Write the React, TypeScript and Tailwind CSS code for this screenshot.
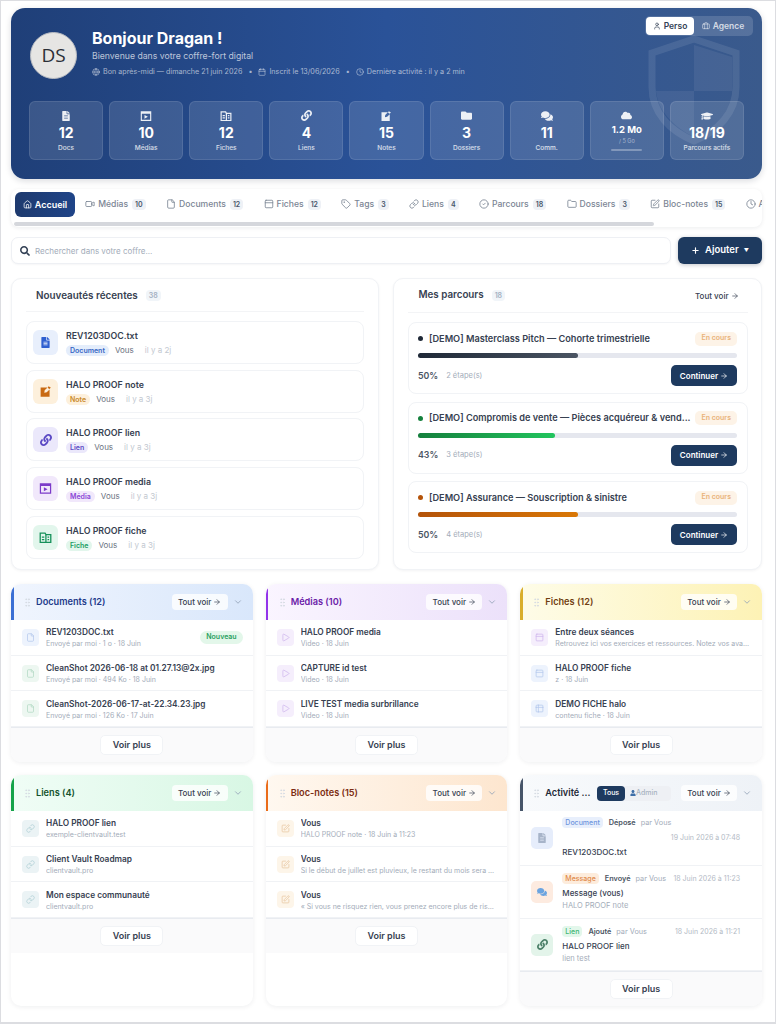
import { ReactNode } from 'react';
import {
  ArrowRight,
  Briefcase,
  Calendar,
  ChevronDown,
  Clock,
  File,
  Folder,
  Globe,
  GripVertical,
  House,
  Link as LinkIcon,
  CircleCheck,
  Play,
  Plus,
  SquarePen,
  Table2,
  Tag,
  User,
  Video,
  PanelTop,
} from 'lucide-react';
import {
  FaCloud,
  FaComments,
  FaFileAlt,
  FaFolder,
  FaGraduationCap,
  FaLink,
  FaSearch,
  FaUser,
} from 'react-icons/fa';

const MediaIcon = ({ className }: { className?: string }) => (
  <svg viewBox="0 0 16 16" className={className} fill="currentColor">
    <path d="M1 1.5h14v13H1zM2.5 5v8h11V5z" fillRule="evenodd" />
    <path d="M6 6.5v5l4.5-2.5z" />
  </svg>
);

const FicheIcon = ({ className }: { className?: string }) => (
  <svg viewBox="0 0 16 16" className={className} fill="none" stroke="currentColor" strokeWidth="1.6">
    <path d="M1.5 2.5h6l1 2h6v9.5h-13z" />
    <path d="M8.5 4.5V14M3.5 7.5h3M3.5 10.5h3M10.5 7.5h2M10.5 10.5h2" />
  </svg>
);

const NoteIcon = ({ className }: { className?: string }) => (
  <svg viewBox="0 0 16 16" className={className} fill="currentColor">
    <path d="M2 3h8.5L7 6.5 6.5 9.5 9.5 9 13 5.500V14.500H2z" />
    <path d="M11.500 1.500 14.500 3 13 5 10.800 3.600z" />
  </svg>
);

const Shield = () => (
  <svg viewBox="0 0 100 110" className="absolute right-[18px] top-[26px] h-[112px] w-[100px] text-white opacity-[0.09]">
    <path
      d="M50 4 92 18v34c0 26-18 44-42 54C26 96 8 78 8 52V18z"
      fill="none"
      stroke="currentColor"
      strokeWidth="7"
    />
    <path d="M50 10 88 22v34H50zM50 56v46C30 92 14 76 12 56z" fill="currentColor" fillOpacity="0.7" />
  </svg>
);

const stats = [
  { icon: <FaFileAlt className="size-[10px]" />, value: '12', label: 'Docs' },
  { icon: <MediaIcon className="size-[12px]" />, value: '10', label: 'Médias' },
  { icon: <FicheIcon className="size-[12px]" />, value: '12', label: 'Fiches' },
  { icon: <FaLink className="size-[11px]" />, value: '4', label: 'Liens' },
  { icon: <NoteIcon className="size-[12px]" />, value: '15', label: 'Notes' },
  { icon: <FaFolder className="size-[11px]" />, value: '3', label: 'Dossiers' },
  { icon: <FaComments className="size-[12px]" />, value: '11', label: 'Comm.' },
];

const tabs = [
  { icon: <Video className="size-[10px]" />, label: 'Médias', count: '10' },
  { icon: <File className="size-[10px]" />, label: 'Documents', count: '12' },
  { icon: <PanelTop className="size-[10px]" />, label: 'Fiches', count: '12' },
  { icon: <Tag className="size-[10px]" />, label: 'Tags', count: '3' },
  { icon: <LinkIcon className="size-[10px]" />, label: 'Liens', count: '4' },
  { icon: <CircleCheck className="size-[10px]" />, label: 'Parcours', count: '18' },
  { icon: <Folder className="size-[10px]" />, label: 'Dossiers', count: '3' },
  { icon: <SquarePen className="size-[10px]" />, label: 'Bloc-notes', count: '15' },
];

const recents = [
  {
    title: 'REV1203DOC.txt',
    kind: 'Document',
    when: 'il y a 2j',
    box: 'bg-[#e8effc] text-[#2f5fd0]',
    badge: 'bg-[#e4edfb] text-[#3767c4]',
    icon: <FaFileAlt className="size-[11px]" />,
  },
  {
    title: 'HALO PROOF note',
    kind: 'Note',
    when: 'il y a 3j',
    box: 'bg-[#fdf0dc] text-[#c96a12]',
    badge: 'bg-[#fdf0dc] text-[#c98a2a]',
    icon: <NoteIcon className="size-[13px]" />,
  },
  {
    title: 'HALO PROOF lien',
    kind: 'Lien',
    when: 'il y a 3j',
    box: 'bg-[#ebe8fb] text-[#5b49c4]',
    badge: 'bg-[#ebe8fb] text-[#5b49c4]',
    icon: <FaLink className="size-[12px]" />,
  },
  {
    title: 'HALO PROOF media',
    kind: 'Média',
    when: 'il y a 3j',
    box: 'bg-[#f1e8fb] text-[#7c3bc9]',
    badge: 'bg-[#f1e8fb] text-[#8a46d6]',
    icon: <MediaIcon className="size-[13px]" />,
  },
  {
    title: 'HALO PROOF fiche',
    kind: 'Fiche',
    when: 'il y a 3j',
    box: 'bg-[#e2f6ec] text-[#16915a]',
    badge: 'bg-[#e2f6ec] text-[#1b9e63]',
    icon: <FicheIcon className="size-[13px]" />,
  },
];

const courses = [
  {
    title: '[DEMO] Masterclass Pitch — Cohorte trimestrielle',
    dot: 'bg-[#1f2937]',
    bar: 'w-1/2 bg-gradient-to-r from-[#1f2937] to-[#4b5563]',
    pct: '50%',
    steps: '2 étape(s)',
  },
  {
    title: '[DEMO] Compromis de vente — Pièces acquéreur & vend...',
    dot: 'bg-[#15803d]',
    bar: 'w-[43%] bg-gradient-to-r from-[#15803d] to-[#22c55e]',
    pct: '43%',
    steps: '3 étape(s)',
  },
  {
    title: '[DEMO] Assurance — Souscription & sinistre',
    dot: 'bg-[#b45309]',
    bar: 'w-1/2 bg-gradient-to-r from-[#b45309] to-[#d97706]',
    pct: '50%',
    steps: '4 étape(s)',
  },
];

type Row = { title: string; sub: string; box: string; icon: ReactNode; isNew?: boolean };

const docBox = 'bg-[#edf3fd] text-[#b4c8ec]';
const docGreen = 'bg-[#edf7f1] text-[#b2d8c3]';
const playBox = 'bg-[#f5eefc] text-[#cfb6ee]';
const linkBox = 'bg-[#ebf3f5] text-[#b0d0d6]';
const noteBox = 'bg-[#fdf5e9] text-[#e8c7a2]';
const docIcon = <File className="size-[9px]" />;
const playIcon = <Play className="size-[9px]" />;
const linkIcon = <LinkIcon className="size-[9px]" />;
const noteIcon = <SquarePen className="size-[9px]" />;

const topWidgets = [
  {
    title: 'Documents (12)',
    head: 'from-[#f0f5fe] to-[#d9e7fb]',
    accent: 'bg-[#3b6fd4]',
    color: 'text-[#1e3a8a]',
    rows: [
      { title: 'REV1203DOC.txt', sub: 'Envoyé par moi · 1 o · 18 Juin', box: docBox, icon: docIcon, isNew: true },
      { title: 'CleanShot 2026-06-18 at 01.27.13@2x.jpg', sub: 'Envoyé par moi · 494 Ko · 18 Juin', box: docGreen, icon: docIcon },
      { title: 'CleanShot-2026-06-17-at-22.34.23.jpg', sub: 'Envoyé par moi · 126 Ko · 17 Juin', box: docGreen, icon: docIcon },
    ] as Row[],
  },
  {
    title: 'Médias (10)',
    head: 'from-[#faf5ff] to-[#ece1fa]',
    accent: 'bg-[#9333ea]',
    color: 'text-[#6b21a8]',
    rows: [
      { title: 'HALO PROOF media', sub: 'Video · 18 Juin', box: playBox, icon: playIcon },
      { title: 'CAPTURE id test', sub: 'Video · 18 Juin', box: playBox, icon: playIcon },
      { title: 'LIVE TEST media surbrillance', sub: 'Video · 18 Juin', box: playBox, icon: playIcon },
    ] as Row[],
  },
  {
    title: 'Fiches (12)',
    head: 'from-[#fefce8] to-[#fdf2b5]',
    accent: 'bg-[#d9ae2c]',
    color: 'text-[#713f12]',
    rows: [
      { title: 'Entre deux séances', sub: 'Retrouvez ici vos exercices et ressources. Notez vos avancées ici', box: playBox, icon: <PanelTop className="size-[9px]" /> },
      { title: 'HALO PROOF fiche', sub: 'z · 18 Juin', box: docBox, icon: <PanelTop className="size-[9px]" /> },
      { title: 'DEMO FICHE halo', sub: 'contenu fiche · 18 Juin', box: docBox, icon: <Table2 className="size-[9px]" /> },
    ] as Row[],
  },
];

const bottomWidgets = [
  {
    title: 'Liens (4)',
    head: 'from-[#f0fdf6] to-[#d8f7e4]',
    accent: 'bg-[#16a34a]',
    color: 'text-[#14532d]',
    rows: [
      { title: 'HALO PROOF lien', sub: 'exemple-clientvault.test', box: linkBox, icon: linkIcon },
      { title: 'Client Vault Roadmap', sub: 'clientvault.pro', box: linkBox, icon: linkIcon },
      { title: 'Mon espace communauté', sub: 'clientvault.pro', box: linkBox, icon: linkIcon },
    ] as Row[],
  },
  {
    title: 'Bloc-notes (15)',
    head: 'from-[#fff8f0] to-[#fde6cf]',
    accent: 'bg-[#ea6c1a]',
    color: 'text-[#7c2d12]',
    rows: [
      { title: 'Vous', sub: 'HALO PROOF note · 18 Juin à 11:23', box: noteBox, icon: noteIcon },
      { title: 'Vous', sub: 'Si le début de juillet est pluvieux, le restant du mois sera pluvieux aussi', box: noteBox, icon: noteIcon },
      { title: 'Vous', sub: '« Si vous ne risquez rien, vous prenez encore plus de risques »', box: noteBox, icon: noteIcon },
    ] as Row[],
  },
];

const activity = [
  {
    kind: 'Document',
    badge: 'bg-[#e8effc] text-[#6f95dc]',
    verb: 'Déposé',
    date: '19 Juin 2026 à 07:48',
    title: 'REV1203DOC.txt',
    sub: '',
    box: 'bg-[#e6edfb] text-[#a7b4c9]',
    icon: <FaFileAlt className="size-[10px]" />,
    h: 'h-[55px]',
  },
  {
    kind: 'Message',
    badge: 'bg-[#fdecdc] text-[#e08a4a]',
    verb: 'Envoyé',
    date: '18 Juin 2026 à 11:23',
    title: 'Message (vous)',
    sub: 'HALO PROOF note',
    box: 'bg-[#fdebe0] text-[#6ba4e0]',
    icon: <FaComments className="size-[10px]" />,
    h: 'h-[53px]',
  },
  {
    kind: 'Lien',
    badge: 'bg-[#e3f7eb] text-[#3fb573]',
    verb: 'Ajouté',
    date: '18 Juin 2026 à 11:21',
    title: 'HALO PROOF lien',
    sub: 'lien test',
    box: 'bg-[#e3f4ea] text-[#4b7f68]',
    icon: <FaLink className="size-[11px]" />,
    h: 'h-[52px]',
  },
];

function WidgetHead({ title, head, accent, color, children }: { title: string; head: string; accent: string; color: string; children?: ReactNode }) {
  return (
    <div className={`relative flex h-[36px] shrink-0 items-center bg-gradient-to-r pl-[11px] pr-[10px] ${head}`}>
      <span className={`absolute bottom-0 left-0 top-0 w-[2.5px] ${accent}`} />
      <GripVertical className="size-[11px] shrink-0 text-[#d5dbe3]" />
      <span className={`ml-[3px] flex-1 truncate text-[9.2px] font-semibold ${color}`}>{title}</span>
      {children}
      <span className="flex h-[16px] w-[56px] shrink-0 items-center justify-center gap-[2px] rounded-[4px] bg-white/80 text-[8px] font-medium text-[#374151]">
        Tout voir <ArrowRight className="size-[8px]" />
      </span>
      <ChevronDown className="ml-[5px] size-[10px] shrink-0 text-[#94a3b8]" />
    </div>
  );
}

function VoirPlus() {
  return (
    <div className="flex h-[35px] shrink-0 items-center justify-center border-t border-[#e8ebf0] bg-[#fafafb]">
      <span className="flex h-[20px] w-[63px] items-center justify-center rounded-[5px] border border-[#f1f3f6] bg-white text-[9px] font-semibold text-[#374151]">
        Voir plus
      </span>
    </div>
  );
}

function Widget({ title, head, accent, color, rows }: { title: string; head: string; accent: string; color: string; rows: Row[] }) {
  return (
    <div className="flex flex-col overflow-hidden rounded-[10px] bg-white shadow-[0_1px_5px_rgba(15,23,42,0.07)]">
      <WidgetHead title={title} head={head} accent={accent} color={color} />
      {rows.map((row) => (
        <div key={row.title + row.sub} className="flex h-[35.7px] shrink-0 items-center gap-[7px] border-b border-[#f0f2f5] pl-[11px] pr-[10px] last:border-b-0">
          <span className={`flex size-[17px] shrink-0 items-center justify-center rounded-[4px] ${row.box}`}>{row.icon}</span>
          <div className="min-w-0 flex-1 pt-[1px]">
            <p className="truncate text-[8.3px] font-semibold leading-[12px] text-[#374151]">{row.title}</p>
            <p className="truncate text-[7px] leading-[11px] text-[#a3acb9]">{row.sub}</p>
          </div>
          {row.isNew && (
            <span className="rounded-full bg-[#e3f7ea] px-[6px] py-[1px] text-[7px] font-semibold text-[#28a060]">Nouveau</span>
          )}
        </div>
      ))}
      <VoirPlus />
    </div>
  );
}

export default function App() {
  return (
    <div className="h-[1024px] overflow-hidden border border-b-2 border-[#dcdde1] bg-white pl-[10px] pt-[7px] font-['Inter',sans-serif]">
      <div className="w-[751px]">
        {/* hero */}
        <section className="relative h-[171px] overflow-hidden rounded-[14px] bg-gradient-to-r from-[#1f3f78] via-[#2a5298] to-[#3a5a8c] px-[18px] pt-[24px] shadow-[0_2px_6px_rgba(15,23,42,0.15)]">
          <Shield />
          <span className="absolute right-[9px] top-[8px] flex h-[20px] w-[108px] items-center rounded-[5px] bg-white/15 p-[1px] text-[8.5px] font-semibold">
            <span className="flex h-full w-[48px] items-center justify-center gap-[3px] rounded-[4px] bg-white text-[#334155]">
              <User className="size-[8px]" /> Perso
            </span>
            <span className="flex flex-1 items-center justify-center gap-[3px] text-white/75">
              <Briefcase className="size-[8px]" /> Agence
            </span>
          </span>
          <div className="relative flex h-[48px] items-start gap-[15px]">
            <div className="ml-[1px] flex size-[47px] shrink-0 items-center justify-center rounded-full border-[1.5px] border-[#b9bcc2] bg-[#e6e5e3] font-['Open_Sans',sans-serif] text-[19px] text-[#2b2f36]">
              DS
            </div>
            <div className="-mt-[5px]">
              <h1 className="text-[16px] font-bold leading-[22px] text-white">Bonjour Dragan !</h1>
              <p className="mt-[1px] text-[8.7px] leading-[12px] text-white/70">Bienvenue dans votre coffre-fort digital</p>
              <p className="mt-[4px] flex items-center gap-[3px] text-[7.2px] leading-[12px] text-white/60">
                <Globe className="size-[8px]" /> Bon après-midi — dimanche 21 juin 2026
                <span className="mx-[3px]">•</span>
                <Calendar className="size-[8px]" /> Inscrit le 13/06/2026
                <span className="mx-[3px]">•</span>
                <Clock className="size-[8px]" /> Dernière activité : il y a 2 min
              </p>
            </div>
          </div>
          <div className="relative mt-[21px] grid grid-cols-9 gap-[6px] text-white">
            {stats.map((s) => (
              <div key={s.label} className="flex h-[59px] flex-col items-center rounded-[6px] border border-white/10 bg-white/12 pt-[6px]">
                <span className="flex h-[15px] items-center text-white/90">{s.icon}</span>
                <span className="text-[14px] font-bold leading-[20px]">{s.value}</span>
                <span className="text-[6.5px] font-medium leading-[10px] text-white/80">{s.label}</span>
              </div>
            ))}
            <div className="flex h-[59px] flex-col items-center rounded-[6px] border border-white/10 bg-white/12 pt-[6px]">
              <span className="flex h-[14px] items-center text-white/90">
                <FaCloud className="size-[11px]" />
              </span>
              <span className="text-[9.5px] font-bold leading-[15px]">1.2 Mo</span>
              <span className="text-[5.5px] leading-[9px] text-white/50">/ 5 Go</span>
              <span className="mt-[3px] h-[1.5px] w-[31px] rounded bg-white/30" />
            </div>
            <div className="flex h-[59px] flex-col items-center rounded-[6px] border border-white/10 bg-white/12 pt-[6px]">
              <span className="flex h-[15px] items-center text-white/90">
                <FaGraduationCap className="size-[12px]" />
              </span>
              <span className="text-[14px] font-bold leading-[20px]">18/19</span>
              <span className="text-[6.5px] font-medium leading-[10px] text-white/80">Parcours actifs</span>
            </div>
          </div>
        </section>

        {/* tabs */}
        <nav className="relative mt-[10px] h-[38px] overflow-hidden rounded-[8px] bg-white pl-[4px] pt-[3px] shadow-[0_1px_4px_rgba(15,23,42,0.08)]">
          <div className="flex w-[900px] items-center">
            <span className="flex h-[25px] w-[60px] shrink-0 items-center justify-center gap-[3px] rounded-[6px] bg-gradient-to-r from-[#1e3a6e] to-[#1f4488] text-[9px] font-semibold text-white">
              <House className="size-[9px]" /> Accueil
            </span>
            {tabs.map((t) => (
              <span key={t.label} className="flex shrink-0 items-center gap-[3px] px-[10.200px] text-[8.6px] font-medium text-[#7b8594]">
                {t.icon}
                {t.label}
                <span className="ml-[1px] rounded-[4px] bg-[#eef1f6] px-[3px] text-[7px] font-semibold leading-[11px] text-[#475569]">{t.count}</span>
              </span>
            ))}
            <span className="flex shrink-0 items-center gap-[3px] px-[10px] text-[8.6px] font-medium text-[#7b8594]">
              <Clock className="size-[10px]" /> Activité
            </span>
          </div>
          <span className="absolute bottom-[1px] left-[3px] h-[4px] w-[640px] rounded-full bg-[#d5d7dc]" />
        </nav>

        {/* search */}
        <div className="mt-[10px] flex h-[27px] gap-[7px]">
          <div className="flex flex-1 items-center gap-[5px] rounded-[7px] border border-[#eef0f4] bg-white pl-[8px] shadow-[0_1px_2px_rgba(15,23,42,0.04)]">
            <FaSearch className="size-[10px] text-[#334155]" />
            <span className="text-[8px] text-[#a3acb9]">Rechercher dans votre coffre...</span>
          </div>
          <span className="flex w-[84px] items-center justify-center gap-[5px] rounded-[6px] bg-[#1e3a5f] text-[9.5px] font-semibold text-white shadow-[0_1px_4px_rgba(15,23,42,0.25)]">
            <Plus className="size-[9px]" strokeWidth={3} /> Ajouter <span className="text-[5px]">▼</span>
          </span>
        </div>

        {/* panels */}
        <div className="mt-[14px] grid grid-cols-[368px_369px] gap-[14px]">
          <section className="h-[292px] rounded-[10px] border border-[#f1f3f6] bg-white px-[14px] shadow-[0_1px_3px_rgba(15,23,42,0.05)]">
            <header className="flex h-[33px] items-center gap-[8px] border-b border-[#f3f4f6] pl-[10px]">
              <h2 className="text-[9.9px] font-semibold text-[#374151]">Nouveautés récentes</h2>
              <span className="rounded-[4px] bg-[#f1f5f9] px-[3px] text-[7px] font-semibold leading-[11px] text-[#a3b0c2]">38</span>
            </header>
            <div className="mt-[9px] flex flex-col gap-[5.700px]">
              {recents.map((r) => (
                <div key={r.title} className="flex h-[43px] items-center gap-[8px] rounded-[8px] border border-[#f1f3f6] pl-[6px]">
                  <span className={`flex size-[25px] shrink-0 items-center justify-center rounded-[6px] ${r.box}`}>{r.icon}</span>
                  <div>
                    <p className="text-[8.8px] font-semibold leading-[13px] text-[#374151]">{r.title}</p>
                    <p className="mt-[3px] flex items-center text-[8px] leading-[11px]">
                      <span className={`rounded-full px-[4px] text-[7px] font-semibold ${r.badge}`}>{r.kind}</span>
                      <span className="ml-[6px] text-[#6b7280]">Vous</span>
                      <span className="ml-[11px] text-[#c2c8d0]">{r.when}</span>
                    </p>
                  </div>
                </div>
              ))}
            </div>
          </section>

          <section className="h-[292px] rounded-[10px] border border-[#f1f3f6] bg-white px-[13.500px] shadow-[0_1px_3px_rgba(15,23,42,0.05)]">
            <header className="flex h-[34px] items-center gap-[8px] border-b border-[#f3f4f6] pl-[11px] pr-[9px]">
              <h2 className="text-[9.8px] font-semibold text-[#374151]">Mes parcours</h2>
              <span className="rounded-[4px] bg-[#f1f5f9] px-[3px] text-[7px] font-semibold leading-[11px] text-[#a3b0c2]">18</span>
              <span className="ml-auto flex items-center gap-[2px] text-[8px] font-medium text-[#374151]">
                Tout voir <ArrowRight className="size-[8px]" />
              </span>
            </header>
            <div className="mt-[9px] flex flex-col gap-[7.500px]">
              {courses.map((c) => (
                <div key={c.title} className="h-[72px] rounded-[8px] border border-[#f1f3f6] px-[9.500px] pt-[8px]">
                  <div className="flex h-[15px] items-center">
                    <span className={`size-[5px] rounded-full ${c.dot}`} />
                    <p className="ml-[6px] flex-1 truncate text-[9.2px] font-semibold text-[#374151]">{c.title}</p>
                    <span className="flex h-[14px] items-center rounded-[5px] bg-[#fdf3e7] px-[6px] text-[7px] font-semibold text-[#e9b27a]">En cours</span>
                  </div>
                  <div className="mt-[7px] h-[5px] rounded-full bg-[#e5e7ee]">
                    <div className={`h-full rounded-full ${c.bar}`} />
                  </div>
                  <div className="mt-[7px] flex items-center">
                    <span className="text-[8.8px] font-semibold text-[#4b5563]">{c.pct}</span>
                    <span className="ml-[8px] text-[7.5px] text-[#a3acb9]">{c.steps}</span>
                    <span className="ml-auto flex h-[21px] w-[66px] items-center justify-center gap-[2px] rounded-[5px] bg-[#1e3a5f] text-[8px] font-semibold text-white">
                      Continuer <ArrowRight className="size-[8px]" />
                    </span>
                  </div>
                </div>
              ))}
            </div>
          </section>
        </div>

        {/* widgets */}
        <div className="mt-[14px] grid grid-cols-3 gap-[13px]">
          {topWidgets.map((w) => (
            <Widget key={w.title} {...w} />
          ))}
        </div>
        <div className="mt-[13px] grid h-[231px] grid-cols-3 gap-[13px]">
          {bottomWidgets.map((w) => (
            <Widget key={w.title} {...w} />
          ))}
          <div className="flex flex-col overflow-hidden rounded-[10px] bg-white shadow-[0_1px_5px_rgba(15,23,42,0.07)]">
            <WidgetHead title="Activité ..." head="from-[#f8fafc] to-[#eef2f7]" accent="bg-[#475569]" color="text-[#1f2937]">
              <span className="mr-[10px] flex h-[15px] w-[74px] items-center rounded-[4px] bg-[#eef0f4] text-[7px] font-medium">
                <span className="flex h-full w-[28px] items-center justify-center rounded-[4px] bg-[#1e3a5f] text-white">Tous</span>
                <span className="ml-[5px] flex items-center text-[#a8b2c0]">
                  <FaUser className="size-[6px] text-[#3f6fa8]" />
                  Admin
                </span>
              </span>
            </WidgetHead>
            {activity.map((a) => (
              <div key={a.kind} className={`flex shrink-0 items-center gap-[9px] border-b border-[#f0f2f5] pl-[11px] pr-[22px] last:border-b-0 ${a.h}`}>
                <span className={`flex size-[22px] shrink-0 items-center justify-center rounded-[5px] ${a.box}`}>{a.icon}</span>
                <div className="min-w-0 flex-1">
                  <div className="flex flex-wrap items-center gap-y-[4px] text-[7.3px] leading-[11px]">
                    <span className={`rounded-[4px] px-[3px] text-[7px] font-medium ${a.badge}`}>{a.kind}</span>
                    <span className="ml-[6px] font-semibold text-[#4b5563]">{a.verb}</span>
                    <span className="ml-[5px] text-[#a3acb9]">par Vous</span>
                    <span className="ml-auto whitespace-nowrap pl-[4px] text-[7px] text-[#b3bac5]">{a.date}</span>
                  </div>
                  <p className="mt-[3px] text-[8px] font-medium leading-[13px] text-[#374151]">{a.title}</p>
                  {a.sub && <p className="text-[7.5px] leading-[11px] text-[#a3acb9]">{a.sub}</p>}
                </div>
              </div>
            ))}
            <VoirPlus />
          </div>
        </div>
      </div>
    </div>
  );
}
